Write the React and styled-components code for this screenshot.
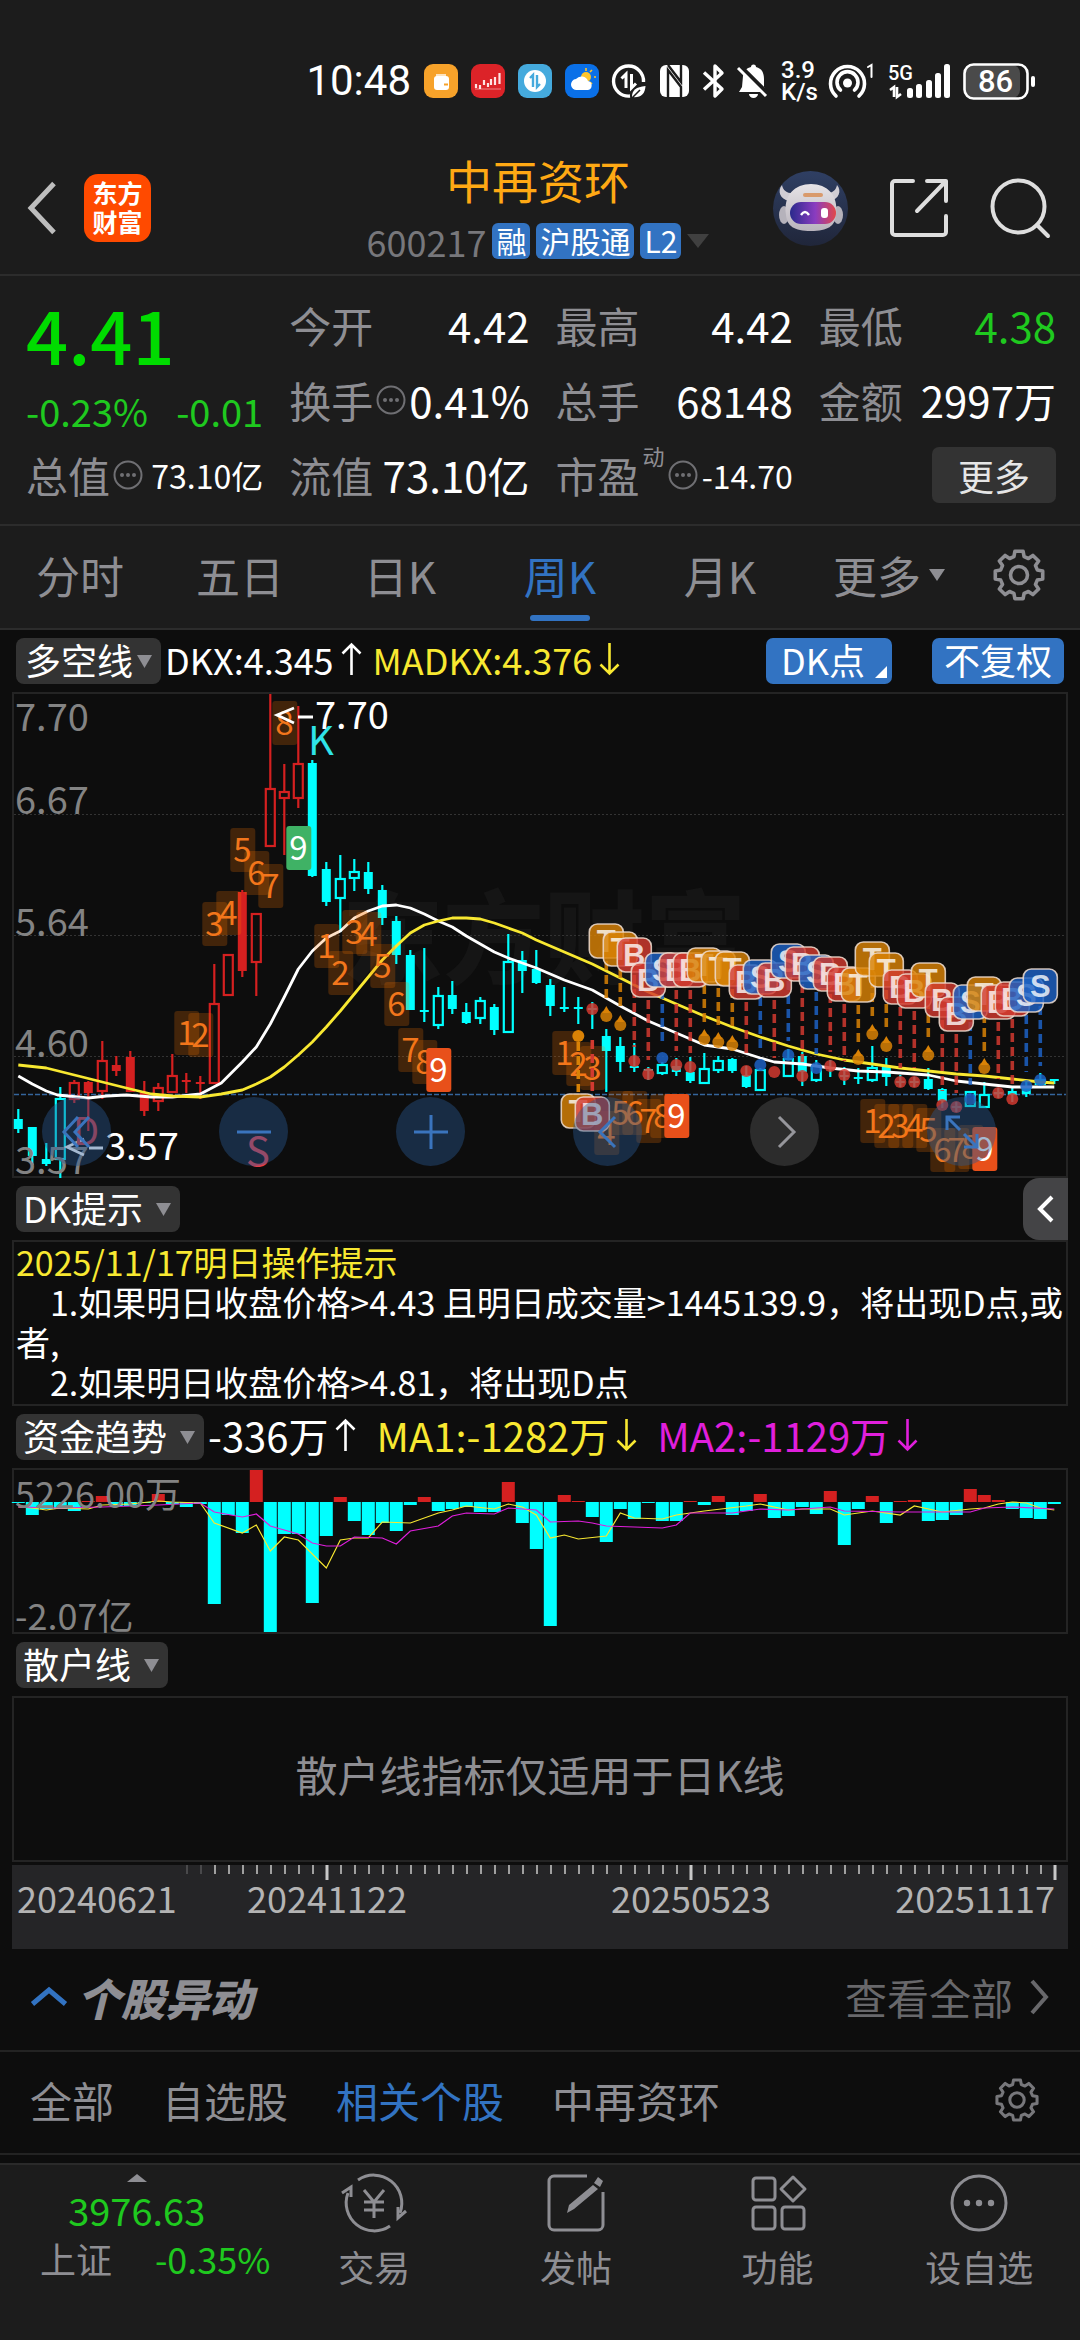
import React from "react";
import styled, { createGlobalStyle, css } from "styled-components";

const c = {
  bar: "#1c1c1c",
  page: "#0d0d0d",
  line: "#2c2c2c",
  frame: "#242424",
  pill: "#333333",
  grey: "#8e8e93",
  blue: "#3273c2",
  green: "#1fc91f",
  cyan: "#00ffff",
  red: "#d42020",
  yellow: "#f8e831",
  magenta: "#e01fdc",
};

const Global = createGlobalStyle`
  * { box-sizing: border-box; }
  body { margin: 0; background: ${c.bar}; }
  body, button, select {
    font-family: "Noto Sans CJK SC", "Noto Sans", sans-serif;
  }
  button {
    border: 0; padding: 0; margin: 0; background: none;
    color: inherit; font-size: inherit; cursor: pointer;
  }
  svg { display: block; flex: none; overflow: visible; }
`;

const Page = styled.main`
  min-height: 100vh;
  display: flex;
  flex-direction: column;
  background: ${c.page};
  color: #fff;
`;

/* ---------- status bar ---------- */
const StatusBar = styled.div`
  height: 136px;
  padding: 26px 44px 0 0;
  display: flex;
  align-items: center;
  justify-content: flex-end;
  gap: 13px;
  background: ${c.bar};
`;
const Clock = styled.time`
  font-size: 42px;
  line-height: 50px;
  font-family: Roboto, "Noto Sans", sans-serif;
`;
const AppDot = styled.span`
  width: 34px;
  height: 34px;
  border-radius: 9px;
  overflow: hidden;
  background: ${(p) => p.$bg};
`;
const NetSpeed = styled.span`
  width: 34px;
  text-align: center;
  font: 500 24px/22px Roboto, sans-serif;
`;

/* ---------- header ---------- */
const Header = styled.header`
  height: 140px;
  padding: 0 30px 0 26px;
  display: grid;
  grid-template-columns: 1fr auto 1fr;
  align-items: center;
  background: ${c.bar};
  border-bottom: 2px solid ${c.line};
`;
const HeadSide = styled.div`
  padding-top: 6px;
  display: flex;
  align-items: center;
  justify-content: ${(p) => (p.$end ? "flex-end" : "flex-start")};
  gap: ${(p) => (p.$end ? "42px" : "25px")};
`;
const Logo = styled.span`
  width: 67px;
  height: 68px;
  padding-top: 4px;
  border-radius: 14px;
  background: #ff4a00;
  font-weight: 700;
  font-size: 25px;
  line-height: 29px;
  text-align: center;
`;
const HeadMid = styled.div`
  display: flex;
  flex-direction: column;
  align-items: center;
  gap: 16px;
`;
const StockName = styled.h1`
  margin: 0;
  font-size: 46px;
  line-height: 56px;
  font-weight: 400;
  color: #ffa914;
`;
const CodeRow = styled.div`
  display: flex;
  align-items: center;
  gap: 6px;
  font-size: 36px;
  line-height: 36px;
  color: #77777b;
`;
const Tag = styled.span`
  height: 36px;
  padding: 0 4px;
  border-radius: 6px;
  background: ${c.blue};
  color: #fff;
  font-size: 30px;
  line-height: 34px;
`;

/* ---------- quote panel ---------- */
const Quote = styled.section`
  padding: 11px 24px 12px 26px;
  display: grid;
  grid-template-columns: repeat(4, 1fr);
  grid-auto-rows: 75px;
  column-gap: 26px;
  background: ${c.bar};
  border-bottom: 2px solid ${c.line};
`;
const PriceCell = styled.div`
  grid-row: span 2;
  color: ${c.green};
`;
const Price = styled.div`
  font-size: 74px;
  line-height: 92px;
  font-weight: 500;
  color: #00dc00;
`;
const Change = styled.div`
  display: flex;
  justify-content: space-between;
  font-size: 38px;
  line-height: 64px;
`;
const Cell = styled.div`
  display: flex;
  align-items: center;
  gap: 3px;
  white-space: nowrap;
`;
const Label = styled.span`
  font-size: 42px;
  line-height: 56px;
  color: ${c.grey};
`;
const Sup = styled.sup`
  align-self: flex-start;
  font-size: 22px;
  line-height: 36px;
  color: ${c.grey};
`;
const Value = styled.span`
  margin-left: auto;
  font-size: ${(p) => (p.$small ? 32 : 42)}px;
  line-height: 56px;
  color: ${(p) => (p.$green ? c.green : "#fff")};
`;
const MoreButton = styled.button`
  width: 124px;
  height: 56px;
  margin-left: auto;
  border-radius: 7px;
  background: ${c.pill};
  color: #e6e6e6;
  font-size: 36px;
  line-height: 50px;
`;

/* ---------- period tabs ---------- */
const Periods = styled.nav`
  height: 104px;
  padding-right: 20px;
  display: grid;
  grid-template-columns: repeat(5, 160fr) 178fr 82fr;
  background: ${c.bar};
  border-bottom: 2px solid ${c.line};
`;
const Period = styled.button`
  position: relative;
  padding-bottom: 5px;
  display: flex;
  align-items: center;
  justify-content: center;
  gap: 8px;
  font-size: 44px;
  color: ${(p) => (p.$on ? c.blue : c.grey)};
  ${(p) =>
    p.$on &&
    css`
      &::after {
        content: "";
        position: absolute;
        left: calc(50% - 30px);
        bottom: 7px;
        width: 60px;
        height: 6px;
        border-radius: 3px;
        background: ${c.blue};
      }
    `}
`;

/* ---------- chart blocks ---------- */
const Tools = styled.div`
  height: 62px;
  padding-left: 16px;
  padding-right: ${(p) => (p.$flush ? 12 : 16)}px;
  display: flex;
  align-items: center;
  font-size: ${(p) => p.$size || 36}px;
  line-height: 42px;
  white-space: nowrap;
`;
const PickBox = styled.label`
  display: grid;
  align-items: center;
  > * { grid-area: 1 / 1; }
  svg { justify-self: end; margin-right: 9px; pointer-events: none; }
`;
const Pick = styled.select`
  appearance: none;
  height: 46px;
  margin: 0;
  padding: 0 ${(p) => (p.$tight ? 27 : 36)}px 4px ${(p) => (p.$tight ? 9 : 7)}px;
  border: 0;
  border-radius: 8px;
  background: ${c.pill};
  color: #fff;
  font-size: 36px;
  line-height: 42px;
`;
const Reading = styled.span`
  display: flex;
  align-items: center;
  gap: 7px;
  padding: 0 0 4px 4px;
  margin-right: ${(p) => (p.$tight ? 7 : 16)}px;
  color: ${(p) => p.$color};
`;
const ToolEnd = styled.div`
  margin-left: auto;
  align-self: ${(p) => (p.$stretch ? "stretch" : "center")};
  display: flex;
  gap: 40px;
`;
const BlueButton = styled.button`
  position: relative;
  height: 46px;
  padding: 0 ${(p) => (p.$corner ? 27 : 12)}px 4px ${(p) => (p.$corner ? 15 : 12)}px;
  border-radius: 7px;
  background: ${c.blue};
  color: #fff;
  font-size: 36px;
  line-height: 42px;
  svg { position: absolute; right: 5px; bottom: 6px; }
`;
const DrawerButton = styled.button`
  width: 45px;
  display: grid;
  place-items: center;
  border-radius: 16px 0 0 16px;
  background: #444446;
`;
const Panel = styled.div`
  position: relative;
  margin: 0 12px;
  border: 2px solid ${c.frame};
  > svg { width: 100%; height: auto; }
`;
const Tips = styled(Panel)`
  padding: 0 2px 2px;
  font-size: 34px;
  line-height: 40px;
  p { margin: 0; white-space: pre-wrap; }
  p:first-child { color: ${c.yellow}; }
`;
const Empty = styled(Panel)`
  height: 166px;
  padding-bottom: 10px;
  display: grid;
  place-items: center;
  font-size: 42px;
  line-height: 56px;
  color: ${c.grey};
`;
const Axis = styled.div`
  margin: 3px 12px 0;
  background: #252527;
  svg { width: 100%; height: auto; }
`;
const Controls = styled.div`
  position: absolute;
  left: 28px;
  right: 70px;
  bottom: 10px;
  display: flex;
  justify-content: space-between;
`;
const RoundButton = styled.button`
  width: 69px;
  height: 69px;
  display: grid;
  place-items: center;
  border-radius: 50%;
  background: ${(p) => (p.$grey ? "#2c2c2c" : "rgba(40, 88, 145, 0.42)")};
  color: ${(p) => (p.$grey ? "#96969b" : "#3a74bd")};
`;

/* ---------- movers ---------- */
const Section = styled.section`
  height: 103px;
  padding: 0 ${(p) => (p.$inset ? 41 : 30)}px 6px 30px;
  display: flex;
  align-items: center;
  border-bottom: 2px solid #232323;
  font-size: 42px;
  line-height: 56px;
`;
const SectionTitle = styled.h2`
  margin: 0 auto 0 9px;
  font-size: 44px;
  font-weight: 900;
  font-style: italic;
  color: ${c.grey};
`;
const MoreLink = styled.a`
  display: flex;
  align-items: center;
  gap: 15px;
  color: #68686b;
  text-decoration: none;
`;
const Filters = styled.div`
  margin-right: auto;
  display: flex;
  gap: 48px;
`;
const Filter = styled.button`
  color: ${(p) => (p.$on ? c.blue : c.grey)};
`;

/* ---------- bottom bar ---------- */
const Bottom = styled.footer`
  flex: 1;
  margin-top: 8px;
  display: grid;
  grid-template-columns: 274fr repeat(4, 202fr);
  align-items: start;
  border-top: 2px solid #2a2a2a;
  background: ${c.bar};
`;
const IndexBlock = styled.button`
  padding-top: 9px;
  display: flex;
  flex-direction: column;
  align-items: center;
  color: ${c.green};
  font-size: 38px;
  line-height: 56px;
`;
const IndexRow = styled.span`
  width: 100%;
  padding: 0 3px 0 40px;
  display: flex;
  justify-content: space-between;
  font-size: 36px;
  line-height: 40px;
  span { color: ${c.grey}; }
`;
const NavItem = styled.button`
  padding-top: 8px;
  display: flex;
  flex-direction: column;
  align-items: center;
  gap: 9px;
  color: ${c.grey};
  font-size: 36px;
  line-height: 48px;
`;

/* ---------- small drawings ---------- */
const Tri = ({ w = 15, h = 13, color = c.grey, up }) => (
  <svg width={w} height={h} viewBox="0 0 10 10" preserveAspectRatio="none" aria-hidden="true">
    <path d={up ? "M0 10 5 0 10 10Z" : "M0 0H10L5 10Z"} fill={color} />
  </svg>
);
const Arrow = ({ down }) => (
  <svg width="21" height="34" viewBox="0 0 21 34" fill="none" stroke="currentColor" strokeWidth="2.6" aria-hidden="true">
    <path d={down ? "M10.5 1V32M1.5 22.500 10.500 31.500 19.500 22.500" : "M10.5 33V2M1.5 11.500 10.500 2.500 19.500 11.500"} />
  </svg>
);
const Dots = () => (
  <svg width="30" height="30" viewBox="0 0 30 30" fill="#6f6f73" aria-hidden="true">
    <circle cx="15" cy="15" r="13.5" fill="none" stroke="#6f6f73" strokeWidth="2" />
    <circle cx="9" cy="15" r="2" />
    <circle cx="15" cy="15" r="2" />
    <circle cx="21" cy="15" r="2" />
  </svg>
);
const Chevron = ({ w, h, dir, stroke, sw = 4 }) => {
  const d = {
    left: `M${w - sw} ${sw / 2}L${sw} ${h / 2}L${w - sw} ${h - sw / 2}`,
    right: `M${sw} ${sw / 2}L${w - sw} ${h / 2}L${sw} ${h - sw / 2}`,
    up: `M${sw / 2} ${h - sw}L${w / 2} ${sw}L${w - sw / 2} ${h - sw}`,
  }[dir];
  return (
    <svg width={w} height={h} fill="none" stroke={stroke} strokeWidth={sw} aria-hidden="true">
      <path d={d} />
    </svg>
  );
};

const gearPath = () => {
  const pts = [];
  for (let i = 0; i < 8; i++) {
    const a = (i * Math.PI) / 4 - Math.PI / 2;
    [[-0.27, 19], [-0.17, 24], [0.17, 24], [0.27, 19]].forEach(([o, r]) =>
      pts.push(`${(26 + r * Math.cos(a + o)).toFixed(1)} ${(26 + r * Math.sin(a + o)).toFixed(1)}`)
    );
  }
  return `M${pts.join("L")}Z`;
};
const Gear = ({ size, color }) => (
  <svg width={size} height={size} viewBox="0 0 52 52" fill="none" stroke={color} strokeWidth="3.6" strokeLinejoin="round" aria-hidden="true">
    <path d={gearPath()} />
    <circle cx="26" cy="26" r="8.5" />
  </svg>
);

const StatusIcons = () => (
  <>
    <AppDot $bg="#f7a22a">
      <svg width="34" height="34" viewBox="0 0 34 34">
        <path d="M12 10h10v3H12z" fill="#fff" opacity=".7" />
        <rect x="10" y="12" width="15" height="14" rx="3" fill="#fff" />
        <path d="M20 20.500h4" stroke="#f7a22a" strokeWidth="2" />
      </svg>
    </AppDot>
    <AppDot $bg="#dc2328">
      <svg width="34" height="34" viewBox="0 0 34 34" stroke="#ffe3e3" fill="none">
        <path d="M4 25 30 25" strokeWidth="1" opacity=".5" />
        <path d="M5 20v4M9 21v4M13 16v5M17 19v4M20 15v6M24 13v8M28.500 9v11" strokeWidth="2.200" />
      </svg>
    </AppDot>
    <AppDot $bg="#45aadd">
      <svg width="34" height="34" viewBox="0 0 34 34">
        <circle cx="17" cy="17" r="11" fill="#fff" />
        <path d="M12 14l3-3v12M22 20l-3 3V11" stroke="#45aadd" strokeWidth="2.4" fill="none" />
      </svg>
    </AppDot>
    <AppDot $bg="#0a70e8">
      <svg width="34" height="34" viewBox="0 0 34 34">
        <circle cx="21" cy="13" r="5" fill="#ffc62b" />
        <path d="M21 4v3M29 13h2M27 6l-2 2M27 20l-2-2" stroke="#ffc62b" strokeWidth="1.600" />
        <path d="M12 26a5.500 5.500 0 0 1-1-11 7 7 0 0 1 12 2 4.600 4.600 0 0 1 0 9z" fill="#fff" />
      </svg>
    </AppDot>
    <svg width="34" height="34" viewBox="0 0 34 34" fill="none" stroke="#fff">
      <path d="M31.500 18A15 15 0 1 0 18 32" strokeWidth="3.4" />
      <path d="M9.500 14.500 14 10v14M24 19.500 19.500 24V10" strokeWidth="3" />
      <path d="M20 33c0-7 4-10 13.500-11C33 30 29 34 20 33z" fill="#fff" stroke="none" />
      <path d="M20 34l8-8" stroke="#1c1c1c" strokeWidth="1.600" />
    </svg>
    <svg width="31" height="34" viewBox="0 0 31 34">
      <rect x="1" y="1" width="29" height="32" rx="6" fill="#fff" />
      <path d="M9 33V6l13 17V33M9 1l13 17V1" stroke="#1c1c1c" strokeWidth="2.4" fill="none" />
    </svg>
    <svg width="22" height="34" viewBox="0 0 22 34" fill="none" stroke="#fff" strokeWidth="3.4" strokeLinejoin="round">
      <path d="M1 8.500 19 25l-7 7V2l7 7L1 25.500" />
    </svg>
    <svg width="30" height="34" viewBox="0 0 30 34">
      <path d="M5 12c1-6 4-8 8-9a2.500 2.500 0 0 1 5 0c6 1.500 8 6 8 12v8l3 5H1l3-5z" fill="#fff" />
      <path d="M11 30h9a4.500 4 0 0 1-9 0z" fill="#fff" />
      <path d="M2 3 30 31" stroke="#1c1c1c" strokeWidth="6" />
      <path d="M0 4 28 32" stroke="#fff" strokeWidth="3" />
    </svg>
    <NetSpeed>3.9<br />K/s</NetSpeed>
    <svg width="47" height="36" viewBox="0 0 47 36" fill="none" stroke="#fff" strokeWidth="3.6" strokeLinecap="round">
      <path d="M8 33a17 17 0 1 1 23 0" />
      <path d="M12.500 27a10.500 10.500 0 1 1 14 0" />
      <circle cx="19.500" cy="20" r="4.500" fill="#fff" stroke="none" />
      <path d="M40 4l3.500-2v12" strokeWidth="2" />
    </svg>
    <svg width="62" height="36" viewBox="0 0 62 36" fill="#fff">
      <text x="0" y="17" fontFamily="Roboto, sans-serif" fontWeight="500" fontSize="20">5G</text>
      <path d="M2 27l4-3v10M13 31l-4 3V24" stroke="#fff" strokeWidth="2.600" fill="none" />
      <rect x="19" y="25" width="6" height="10" rx="2.500" />
      <rect x="28" y="21" width="6" height="14" rx="2.500" />
      <rect x="38" y="17" width="6" height="18" rx="2.500" />
      <rect x="47" y="10" width="6" height="25" rx="2.500" />
      <rect x="56" y="1" width="6" height="34" rx="2.500" />
    </svg>
    <svg width="73" height="37" viewBox="0 0 73 37">
      <rect x="2" y="2" width="55" height="33" rx="8" fill="#4a4a4a" />
      <rect x="1.500" y="1.500" width="63" height="34" rx="9" fill="none" stroke="#fff" strokeWidth="2.600" />
      <rect x="68" y="13" width="4" height="11" rx="2" fill="#fff" />
      <text x="32.500" y="29" textAnchor="middle" fill="#fff" fontFamily="Roboto, sans-serif" fontWeight="500" fontSize="31">86</text>
    </svg>
  </>
);

const Robot = () => (
  <svg width="75" height="75" viewBox="0 0 75 75" aria-hidden="true">
    <defs>
      <linearGradient id="visor" x1="0" x2="1">
        <stop offset="0" stopColor="#2a2a8c" />
        <stop offset=".55" stopColor="#8a3cc0" />
        <stop offset="1" stopColor="#e2484a" />
      </linearGradient>
      <linearGradient id="shell" x1="0" x2="0" y1="0" y2="1">
        <stop offset="0" stopColor="#e6e3e6" />
        <stop offset="1" stopColor="#b9b4bd" />
      </linearGradient>
      <linearGradient id="disc" x1="0" x2="0" y1="0" y2="1">
        <stop offset="0" stopColor="#2f3f63" />
        <stop offset="1" stopColor="#20263a" />
      </linearGradient>
    </defs>
    <circle cx="37.500" cy="37.500" r="37.500" fill="url(#disc)" />
    <path d="M9 14c-5 6-2 14 7 16l6-8c-7 1-12-2-13-8zM64 14c5 6 2 14-7 16l-6-8c7 1 12-2 13-8z" fill="#d0cdd4" />
    <ellipse cx="11" cy="44" rx="5" ry="9" fill="#b5b2bb" />
    <ellipse cx="65" cy="44" rx="5" ry="9" fill="#b5b2bb" />
    <path d="M13 44C10 24 22 13 38 13S66 24 63 44c-1 11-8 16-25 16S14 55 13 44z" fill="url(#shell)" />
    <rect x="30" y="22" width="20" height="4" rx="2" fill="#d99a6c" />
    <rect x="17" y="31" width="46" height="22" rx="11" fill="url(#visor)" />
    <path d="M28 44q4-6 8 0" stroke="#fff" strokeWidth="2.400" fill="none" />
    <rect x="48" y="37" width="7" height="10" rx="3" fill="#fff" />
  </svg>
);

/* ---------- chart data ---------- */
const X = (i) => 18.3 + 14 * i;

// [slot, colour, shape, high, body top, body bottom, low]
const candles = [
  [0, "c", "f", 1109, 1119, 1129, 1133], [1, "c", "f", 1127, 1127, 1156, 1165],
  [2, "c", "f", 1143, 1159, 1164, 1166], [3, "c", "h", 1087, 1098, 1160, 1178],
  [4, "r", "h", 1080, 1082, 1100, 1103], [5, "r", "f", 1081, 1082, 1093, 1131],
  [6, "r", "h", 1041, 1060, 1092, 1099], [7, "r", "f", 1056, 1065, 1071, 1076],
  [8, "r", "f", 1051, 1057, 1092, 1092], [9, "r", "f", 1081, 1092, 1111, 1116],
  [10, "r", "h", 1083, 1087, 1102, 1111], [11, "r", "h", 1054, 1075, 1093, 1093],
  [12, "r", "f", 1073, 1080, 1082, 1093], [13, "r", "f", 1076, 1082, 1084, 1099],
  [14, "r", "h", 964, 1003, 1084, 1084], [15, "r", "h", 954, 954, 996, 996],
  [16, "r", "f", 890, 892, 971, 977], [17, "r", "h", 913, 913, 963, 996],
  [18, "r", "h", 694, 788, 847, 847], [19, "r", "h", 764, 791, 799, 855],
  [20, "r", "h", 706, 763, 799, 808], [21, "c", "f", 760, 763, 876, 877],
  [22, "c", "f", 862, 869, 902, 906], [23, "c", "h", 855, 878, 899, 932],
  [24, "c", "h", 859, 871, 879, 891], [25, "c", "f", 862, 872, 889, 894],
  [26, "c", "f", 885, 890, 918, 925], [27, "c", "f", 916, 921, 955, 964],
  [28, "c", "f", 950, 955, 1010, 1010], [29, "c", "f", 948, 1010, 1012, 1022],
  [30, "c", "h", 987, 995, 1026, 1029], [31, "c", "f", 981, 995, 1009, 1014],
  [32, "c", "f", 1003, 1012, 1023, 1024], [33, "c", "h", 997, 1000, 1019, 1024],
  [34, "c", "f", 1004, 1007, 1030, 1035], [35, "c", "h", 934, 961, 1033, 1033],
  [36, "c", "f", 951, 960, 971, 993], [37, "c", "f", 950, 969, 983, 984],
  [38, "c", "f", 979, 985, 1006, 1016], [39, "c", "f", 987, 1007, 1009, 1012],
  [40, "c", "f", 997, 1007, 1009, 1024], [41, "c", "f", 1002, 1008, 1010, 1029],
  [42, "c", "f", 1029, 1036, 1051, 1092], [43, "c", "f", 1037, 1046, 1062, 1072],
  [44, "c", "f", 1043, 1066, 1068, 1072], [45, "c", "f", 1067, 1069, 1071, 1080],
  [46, "c", "h", 1062, 1064, 1074, 1075], [47, "c", "f", 1058, 1066, 1072, 1076],
  [48, "c", "f", 1057, 1072, 1081, 1083], [49, "c", "h", 1053, 1068, 1084, 1084],
  [50, "c", "h", 1056, 1060, 1071, 1073], [51, "c", "f", 1058, 1059, 1071, 1073],
  [52, "c", "f", 1066, 1075, 1087, 1088], [53, "c", "h", 1068, 1069, 1091, 1091],
  [55, "c", "h", 1049, 1058, 1077, 1077], [56, "c", "f", 1052, 1056, 1072, 1086],
  [57, "c", "h", 1060, 1065, 1081, 1082], [58, "c", "f", 1060, 1067, 1069, 1077],
  [59, "c", "f", 1067, 1075, 1077, 1085], [60, "c", "f", 1068, 1077, 1079, 1084],
  [61, "c", "h", 1046, 1067, 1081, 1082], [62, "c", "f", 1058, 1067, 1077, 1086],
  [63, "c", "f", 1075, 1081, 1083, 1087], [64, "c", "f", 1077, 1081, 1083, 1087],
  [65, "c", "f", 1068, 1079, 1089, 1090], [66, "c", "f", 1088, 1089, 1101, 1108],
  [67, "c", "f", 1102, 1106, 1108, 1112], [68, "c", "h", 1091, 1091, 1107, 1107],
  [69, "c", "h", 1082, 1094, 1108, 1108], [70, "c", "f", 1088, 1092, 1094, 1098],
  [71, "c", "f", 1088, 1091, 1095, 1102], [72, "c", "f", 1082, 1088, 1094, 1097],
  [73, "c", "h", 1073, 1079, 1085, 1086], [74, "c", "f", 1079, 1079, 1081, 1084],
];

const dkLine = [
  [0, 1076], [1, 1084], [2, 1091], [2.8, 1095], [5, 1098], [6.3, 1096], [7.7, 1095], [9.5, 1097],
  [11, 1097], [13, 1094], [14.5, 1083], [16, 1062], [17, 1047], [18, 1024], [19, 997], [20, 969],
  [21, 951], [22, 938], [23, 931], [24, 918], [25, 911], [26, 906], [27, 905], [28, 908], [29, 914],
  [30, 921], [31, 927], [32, 936], [33, 944], [34, 952], [35, 958], [36, 963], [37, 968], [39, 980],
  [41, 990], [43, 1006], [45, 1021], [47, 1033], [49, 1045], [51, 1049], [53, 1058], [54, 1062],
  [56, 1064], [58, 1068], [60, 1071], [62, 1072], [65, 1075], [67, 1081], [69, 1084], [71, 1087], [74, 1087],
];
const maLine = [
  [0, 1065], [2, 1068], [4, 1075], [6, 1082], [8, 1089], [9.5, 1094], [11, 1096], [13, 1097],
  [14.5, 1094], [16, 1090], [17, 1084], [18, 1077], [19, 1067], [20, 1055], [21, 1042], [22, 1027],
  [23, 1011], [24, 994], [25, 977], [26, 960], [27, 946], [28, 933], [29, 925], [30, 921], [31, 918],
  [32, 918], [33, 919], [34, 923], [35, 928], [36, 933], [37, 940], [39, 952], [41, 964], [43, 978],
  [45, 992], [47, 1004], [49, 1016], [51, 1027], [53, 1037], [55, 1046], [57, 1054], [59, 1060],
  [61, 1064], [63, 1068], [65, 1071], [67, 1074], [69, 1076], [71, 1079], [73, 1082], [74, 1083],
];

// [slot, letter, badge centre, dot centre]
const signals = [
  [42, "T", 941, 1016], [43, "T", 949, 1025], [44, "B", 955, 1061], [45, "B", 980, 1074],
  [46, "S", 970, 1058], [47, "B", 970, 1065], [48, "B", 970, 1067], [49, "T", 965, 1039],
  [50, "T", 968, 1042], [51, "T", 969, 1045], [52, "B", 982, 1071], [53, "S", 977, 1065],
  [54, "B", 980, 1072], [55, "S", 961, 1055], [56, "B", 964, 1076], [57, "S", 972, 1068],
  [58, "B", 974, 1066], [59, "B", 984, 1075], [60, "T", 985, 1059], [61, "T", 959, 1034],
  [62, "T", 970, 1046], [63, "B", 987, 1082], [64, "B", 991, 1082], [65, "T", 980, 1055],
  [66, "B", 1000, 1105], [67, "B", 1014, 1107], [68, "S", 1002, 1099], [69, "T", 994, 1068],
  [70, "B", 1002, 1093], [71, "B", 999, 1099], [72, "S", 995, 1086], [73, "S", 986, 1080],
];
const tint = { T: "#d98206", B: "#d23a30", S: "#1d62c4" };

// [slot, digit, centre, highlight]
const counts = [
  [12, 1, 1033], [13, 2, 1035], [14, 3, 924], [15, 4, 913], [16, 5, 850], [17, 6, 873], [18, 7, 886],
  [19, 8, 723], [20, 9, 848, "#3fb265"],
  [22, 1, 946], [23, 2, 973], [24, 3, 932], [25, 4, 934], [26, 5, 966], [27, 6, 1004], [28, 7, 1050],
  [29, 8, 1062], [30, 9, 1070, "#e8501a"],
  [39, 1, 1053], [40, 2, 1064], [41, 3, 1068], [42, 4, 1133], [43, 5, 1113], [44, 6, 1113], [45, 7, 1121],
  [46, 8, 1116], [47, 9, 1116, "#e8501a"],
  [61, 1, 1121], [62, 2, 1126], [63, 3, 1126], [64, 4, 1126], [65, 5, 1130], [66, 6, 1150], [67, 7, 1150],
  [68, 8, 1147], [69, 9, 1149, "#e8501a"],
];

const poly = (pts) => pts.map(([i, y]) => `${X(i).toFixed(1)},${y}`).join(" ");
const svgFont = { fontFamily: '"Noto Sans CJK SC", "Noto Sans", sans-serif' };

const Candle = ({ d: [i, col, shape, hi, top, bot, lo] }) => {
  const color = col === "c" ? c.cyan : c.red;
  const x = X(i);
  return shape === "f" ? (
    <g stroke={color} fill={color}>
      <path d={`M${x} ${hi}V${lo}`} strokeWidth="2.200" />
      <rect x={x - 4.5} y={top} width="9" height={Math.max(bot - top, 2)} stroke="none" />
    </g>
  ) : (
    <g stroke={color} fill="none" strokeWidth="2.200">
      <path d={`M${x} ${hi}V${top}M${x} ${bot}V${lo}`} />
      <rect x={x - 4.5} y={top + 1} width="9" height={bot - top - 2} />
    </g>
  );
};

const Badge = ({ i, letter, y }) => (
  <g>
    <rect x={X(i) - 17} y={y - 17} width="34" height="34" rx="8" fill={tint[letter]} fillOpacity=".82" stroke="#eeddd0" strokeOpacity=".85" strokeWidth="1.600" />
    <text x={X(i)} y={y + 11} textAnchor="middle" fontFamily="Liberation Sans, sans-serif" fontWeight="700" fontSize="31" fill="#fff" fillOpacity=".78">{letter}</text>
  </g>
);

const KChart = () => (
  <svg viewBox="14 694 1052 482" role="img" aria-label="周K" style={svgFont}>
    <text x="342" y="976" fontSize="101" fontWeight="900" fill="#151515">东方财富</text>
    <g stroke="#333" strokeDasharray="2 2">
      <path d="M14 814.500H1066M14 935.500H1066M14 1056.500H1066" />
    </g>
    <path d="M14 1094.500H1066" stroke="#34659c" strokeWidth="1.400" strokeDasharray="5 2" />
    {candles.map((d) => <Candle key={d[0]} d={d} />)}
    <g fill="none" strokeWidth="2.800" strokeLinejoin="round">
      <polyline points={poly(dkLine)} stroke="#fff" />
      <polyline points={poly(maLine)} stroke={c.yellow} />
    </g>
    {counts.map(([i, n, y, hot]) => (
      <g key={i}>
        <rect x={X(i) - 12} y={y - 22} width="25" height="44" rx="3" fill={hot || "#ff7800"} fillOpacity={hot ? 1 : 0.22} />
        <text x={X(i)} y={y + 12} textAnchor="middle" fontSize="33" fill={hot ? "#fff" : "#f2761c"}>{n}</text>
      </g>
    ))}
    {signals.map(([i, l, y, dot]) => (
      <g key={i} fill={tint[l]}>
        <path d={`M${X(i)} ${y + 20}V${dot - 14}`} stroke={tint[l]} strokeOpacity=".85" strokeWidth="3.600" strokeDasharray="9 5" />
        <circle cx={X(i)} cy={dot} r="6" fillOpacity=".85" />
        {l === "T" && <path d={`M${X(i) - 4} ${dot - 3}L${X(i)} ${dot - 10}L${X(i) + 4} ${dot - 3}Z`} />}
      </g>
    ))}
    {signals.map(([i, l, y]) => <Badge key={i} i={i} letter={l} y={y} />)}
    <g strokeWidth="3.600" strokeDasharray="9 5">
      <path d={`M${X(40)} 1042V1092`} stroke={tint.T} />
      <path d={`M${X(41)} 1040V1096`} stroke={tint.B} />
    </g>
    <circle cx={X(40)} cy="1036" r="6" fill={tint.T} />
    <circle cx={X(41)} cy="1009" r="6" fill={tint.B} fillOpacity=".85" />
    <Badge i={40} letter="T" y={1111} />
    <Badge i={41} letter="B" y={1114} />
    <g fill="#838383" fontSize="38">
      <text x="15" y="731">7.70</text>
      <text x="15" y="814">6.67</text>
      <text x="15" y="936">5.64</text>
      <text x="15" y="1057">4.60</text>
      <text x="15" y="1174">3.57</text>
    </g>
    <g fill="none" stroke="#fff" strokeWidth="2.800">
      <path d="M294 708 277 715 294 723M298 717H313" />
      <path d="M84 1139 67 1147 84 1155M89 1148H103" />
    </g>
    <g fontSize="38">
      <text x="315" y="729" fill="#fff">7.70</text>
      <text x="105" y="1160" fill="#fff">3.57</text>
      <text x="308" y="755" fontSize="40" fill="#2fe3e8">K</text>
      <text x="73" y="1145" fill="#c83a44">D</text>
      <text x="246" y="1166" fontSize="40" fill="#e0404c">S</text>
    </g>
  </svg>
);

// edge of the bar per slot; anything above 1502 is an inflow
const flows = [
  1503, 1515, 1509, 1509, 1511, 1501, 1496, 1506, 1506, 1503, 1494, 1504, 1507, 1504, 1604,
  1515, 1533, 1470, 1632, 1534, 1534, 1603, 1536, 1497, 1521, 1535, 1523, 1531, 1505, 1497,
  1511, 1509, 1507, 1512, 1512, 1482, 1523, 1549, 1626, 1495, 1501, 1517, 1542, 1509, 1519,
  1503, 1521, 1521, 1501, 1505, 1496, 1515, 1511, 1494, 1518, 1516, 1507, 1514, 1491, 1545,
  1509, 1496, 1523, 1501, 1500, 1521, 1520, 1515, 1489, 1495, 1500, 1509, 1518, 1519, 1504,
];
const flowMa1 = [
  [0, 1507], [1, 1508], [2, 1510], [3, 1508], [5, 1509], [6, 1505], [8, 1504], [10, 1501], [11, 1502],
  [13, 1503], [14, 1523], [16, 1533], [17, 1525], [18, 1551], [19, 1537], [20, 1540], [22, 1568],
  [23, 1540], [24, 1538], [25, 1538], [26, 1522], [28, 1523], [30, 1513], [31, 1510], [32, 1506],
  [34, 1509], [35, 1504], [36, 1507], [37, 1515], [38, 1538], [39, 1535], [40, 1539], [42, 1536],
  [43, 1513], [44, 1518], [46, 1519], [47, 1515], [49, 1511], [52, 1506], [53, 1504], [55, 1510],
  [56, 1509], [58, 1509], [59, 1515], [61, 1511], [63, 1515], [64, 1506], [66, 1512], [68, 1509],
  [69, 1508], [70, 1504], [71, 1502], [72, 1503], [73, 1508], [74, 1510],
];
const flowMa2 = [
  [0, 1507], [3, 1508], [6, 1507], [10, 1505], [13, 1503], [14, 1512], [16, 1517], [17, 1514],
  [18, 1526], [20, 1534], [21, 1543], [22, 1546], [23, 1546], [24, 1537], [26, 1538], [27, 1544],
  [28, 1531], [30, 1526], [31, 1516], [32, 1513], [34, 1514], [35, 1508], [37, 1510], [38, 1522],
  [40, 1521], [41, 1523], [42, 1526], [44, 1527], [46, 1528], [47, 1525], [48, 1513], [51, 1513],
  [53, 1509], [55, 1510], [57, 1508], [58, 1507], [59, 1511], [63, 1512], [66, 1512], [68, 1512],
  [69, 1508], [71, 1507], [74, 1509],
];

const FlowChart = () => (
  <svg viewBox="14 1470 1052 162" role="img" aria-label="资金趋势" style={svgFont}>
    {flows.map((y, i) => (
      <rect key={i} x={X(i) - 6.5} y={Math.min(y, 1502)} width="13" height={Math.abs(y - 1502)} fill={y < 1502 ? c.red : c.cyan} />
    ))}
    <g fill="none" strokeWidth="1.200">
      <polyline points={poly(flowMa1)} stroke={c.yellow} />
      <polyline points={poly(flowMa2)} stroke={c.magenta} />
    </g>
    <g fill="#838383" fontSize="36">
      <text x="15" y="1508">5226.00万</text>
      <text x="15" y="1630">-2.07亿</text>
    </g>
  </svg>
);

const TimeAxis = () => (
  <svg viewBox="12 0 1056 84" role="img" aria-label="时间" style={svgFont}>
    {Array.from({ length: 63 }, (_, k) => {
      const x = 187 + 14 * k;
      const major = x === 327 || x === 691 || x === 1055;
      return (
        <path key={k} d={`M${x} 0V${major ? 15 : 9}`} stroke={major ? "#c8c8c8" : "#a0a0a0"} strokeWidth={major ? 3 : 2} strokeOpacity={k < 2 ? 0.3 : 1} />
      );
    })}
    <g fill="#b4b4b4" fontSize="36">
      <text x="17" y="48">20240621</text>
      <text x="327" y="48" textAnchor="middle">20241122</text>
      <text x="691" y="48" textAnchor="middle">20250523</text>
      <text x="1055" y="48" textAnchor="end">20251117</text>
    </g>
  </svg>
);

const Indicator = ({ name, tight }) => (
  <PickBox>
    <Pick $tight={tight} aria-label={name} defaultValue={name}>
      <option>{name}</option>
    </Pick>
    <Tri />
  </PickBox>
);

const glyph = { width: 34, height: 34, fill: "none", stroke: "currentColor", strokeWidth: 3 };
const navIcon = { width: 60, height: 60, viewBox: "0 0 60 60", fill: "none", stroke: "currentColor", strokeWidth: 3 };

const nav = [
  ["交易", (
    <svg {...navIcon}>
      <path d="M14 7A28 28 0 0 1 56 40M46 53A28 28 0 0 1 4 20" />
      <path d="M-2 20 7 14V24M62 38 54 45V34" />
      <path d="M20 17 30 29 40 17M30 29V45M20 29H40M20 37H40" />
    </svg>
  )],
  ["发帖", (
    <svg {...navIcon}>
      <path d="M41 3H8a5 5 0 0 0-5 5V52a5 5 0 0 0 5 5H52a5 5 0 0 0 5-5V19" />
      <path d="M52 4 57 8 54 14 48 10ZM47 12 52 16 28 36 21 40 23 32Z" fill="currentColor" stroke="none" />
    </svg>
  )],
  ["功能", (
    <svg {...navIcon}>
      <rect x="5" y="5" width="22" height="22" rx="3" />
      <rect x="5" y="34" width="22" height="22" rx="3" />
      <rect x="34" y="34" width="22" height="22" rx="3" />
      <path d="M45 4 57 16 45 28 33 16Z" strokeLinejoin="round" />
    </svg>
  )],
  ["设自选", (
    <svg {...navIcon}>
      <circle cx="30" cy="30" r="27" />
      <g fill="currentColor" stroke="none">
        <circle cx="18" cy="30" r="3.200" />
        <circle cx="30" cy="30" r="3.200" />
        <circle cx="42" cy="30" r="3.200" />
      </g>
    </svg>
  )],
];

export default function App() {
  return (
    <Page>
      <Global />
      <StatusBar>
        <Clock>10:48</Clock>
        <StatusIcons />
      </StatusBar>

      <Header>
        <HeadSide>
          <button aria-label="返回"><Chevron w={33} h={54} dir="left" stroke="#bdbdbd" sw={5} /></button>
          <Logo>东方<br />财富</Logo>
        </HeadSide>
        <HeadMid>
          <StockName>中再资环</StockName>
          <CodeRow>
            600217
            <Tag>融</Tag>
            <Tag>沪股通</Tag>
            <Tag>L2</Tag>
            <Tri w={22} h={14} color="#404040" />
          </CodeRow>
        </HeadMid>
        <HeadSide $end>
          <button aria-label="助手"><Robot /></button>
          <button aria-label="分享">
            <svg width="58" height="58" viewBox="0 0 58 58" fill="none" stroke="#dedede" strokeWidth="4" strokeLinecap="round" strokeLinejoin="round">
              <path d="M23 2H5a3 3 0 0 0-3 3V53a3 3 0 0 0 3 3H53a3 3 0 0 0 3-3V37M37 2H56V22M56 2 27 32" />
            </svg>
          </button>
          <button aria-label="搜索">
            <svg width="60" height="60" viewBox="0 0 60 60" fill="none" stroke="#dedede" strokeWidth="4" strokeLinecap="round">
              <circle cx="28.500" cy="28.500" r="26" />
              <path d="M47 47 58 58" />
            </svg>
          </button>
        </HeadSide>
      </Header>

      <Quote>
        <PriceCell>
          <Price>4.41</Price>
          <Change><span>-0.23%</span><span>-0.01</span></Change>
        </PriceCell>
        <Cell><Label>今开</Label><Value>4.42</Value></Cell>
        <Cell><Label>最高</Label><Value>4.42</Value></Cell>
        <Cell><Label>最低</Label><Value $green>4.38</Value></Cell>
        <Cell><Label>换手</Label><Dots /><Value>0.41%</Value></Cell>
        <Cell><Label>总手</Label><Value>68148</Value></Cell>
        <Cell><Label>金额</Label><Value>2997万</Value></Cell>
        <Cell><Label>总值</Label><Dots /><Value $small>73.10亿</Value></Cell>
        <Cell><Label>流值</Label><Value>73.10亿</Value></Cell>
        <Cell><Label>市盈</Label><Sup>动</Sup><Dots /><Value $small>-14.70</Value></Cell>
        <Cell><MoreButton>更多</MoreButton></Cell>
      </Quote>

      <Periods>
        <Period>分时</Period>
        <Period>五日</Period>
        <Period>日K</Period>
        <Period $on>周K</Period>
        <Period>月K</Period>
        <Period>更多<Tri w={16} h={12} /></Period>
        <Period aria-label="设置"><Gear size={52} color={c.grey} /></Period>
      </Periods>

      <Tools>
        <Indicator name="多空线" tight />
        <Reading $tight $color="#fff">DKX:4.345<Arrow /></Reading>
        <Reading $tight $color={c.yellow}>MADKX:4.376<Arrow down /></Reading>
        <ToolEnd>
          <BlueButton $corner>
            DK点
            <svg width="12" height="12" aria-hidden="true"><path d="M12 0V12H0Z" fill="#fff" /></svg>
          </BlueButton>
          <BlueButton>不复权</BlueButton>
        </ToolEnd>
      </Tools>
      <Panel>
        <KChart />
        <Controls>
          <RoundButton aria-label="最早">
            <svg {...glyph}><path d="M18 2 4 17 18 32M29 2 15 17 29 32" /></svg>
          </RoundButton>
          <RoundButton aria-label="缩小">
            <svg {...glyph}><path d="M0 17H34" /></svg>
          </RoundButton>
          <RoundButton aria-label="放大">
            <svg {...glyph}><path d="M0 17H34M17 0V34" /></svg>
          </RoundButton>
          <RoundButton aria-label="向前">
            <svg {...glyph}><path d="M24 2 9 17 24 32" /></svg>
          </RoundButton>
          <RoundButton aria-label="向后" $grey>
            <svg {...glyph}><path d="M11 2 26 17 11 32" /></svg>
          </RoundButton>
          <RoundButton aria-label="全屏">
            <svg {...glyph}><path d="M2 15V2H15M2 2 15 15M32 19V32H19M32 32 19 19" /></svg>
          </RoundButton>
        </Controls>
      </Panel>

      <Tools $flush>
        <Indicator name="DK提示" />
        <ToolEnd $stretch>
          <DrawerButton aria-label="展开">
            <Chevron w={20} h={28} dir="left" stroke="#fff" sw={4} />
          </DrawerButton>
        </ToolEnd>
      </Tools>
      <Tips>
        <p>2025/11/17明日操作提示</p>
        <p>{"\u30001.如果明日收盘价格>4.43 且明日成交量>1445139.9，将出现D点,或者,"}</p>
        <p>{"\u30002.如果明日收盘价格>4.81，将出现D点"}</p>
      </Tips>

      <Tools $size={40}>
        <Indicator name="资金趋势" />
        <Reading $color="#fff">-336万<Arrow /></Reading>
        <Reading $color={c.yellow}>MA1:-1282万<Arrow down /></Reading>
        <Reading $color={c.magenta}>MA2:-1129万<Arrow down /></Reading>
      </Tools>
      <Panel><FlowChart /></Panel>

      <Tools><Indicator name="散户线" /></Tools>
      <Empty>散户线指标仅适用于日K线</Empty>
      <Axis><TimeAxis /></Axis>

      <Section>
        <Chevron w={38} h={24} dir="up" stroke={c.blue} sw={5} />
        <SectionTitle>个股异动</SectionTitle>
        <MoreLink href="#all">
          查看全部
          <Chevron w={22} h={36} dir="right" stroke="#68686b" sw={4} />
        </MoreLink>
      </Section>
      <Section $inset>
        <Filters>
          <Filter>全部</Filter>
          <Filter>自选股</Filter>
          <Filter $on>相关个股</Filter>
          <Filter>中再资环</Filter>
        </Filters>
        <button aria-label="设置"><Gear size={44} color="#77777b" /></button>
      </Section>

      <Bottom>
        <IndexBlock>
          <Tri w={20} h={8} up />
          3976.63
          <IndexRow><span>上证</span>-0.35%</IndexRow>
        </IndexBlock>
        {nav.map(([name, icon]) => (
          <NavItem key={name}>{icon}{name}</NavItem>
        ))}
      </Bottom>
    </Page>
  );
}
